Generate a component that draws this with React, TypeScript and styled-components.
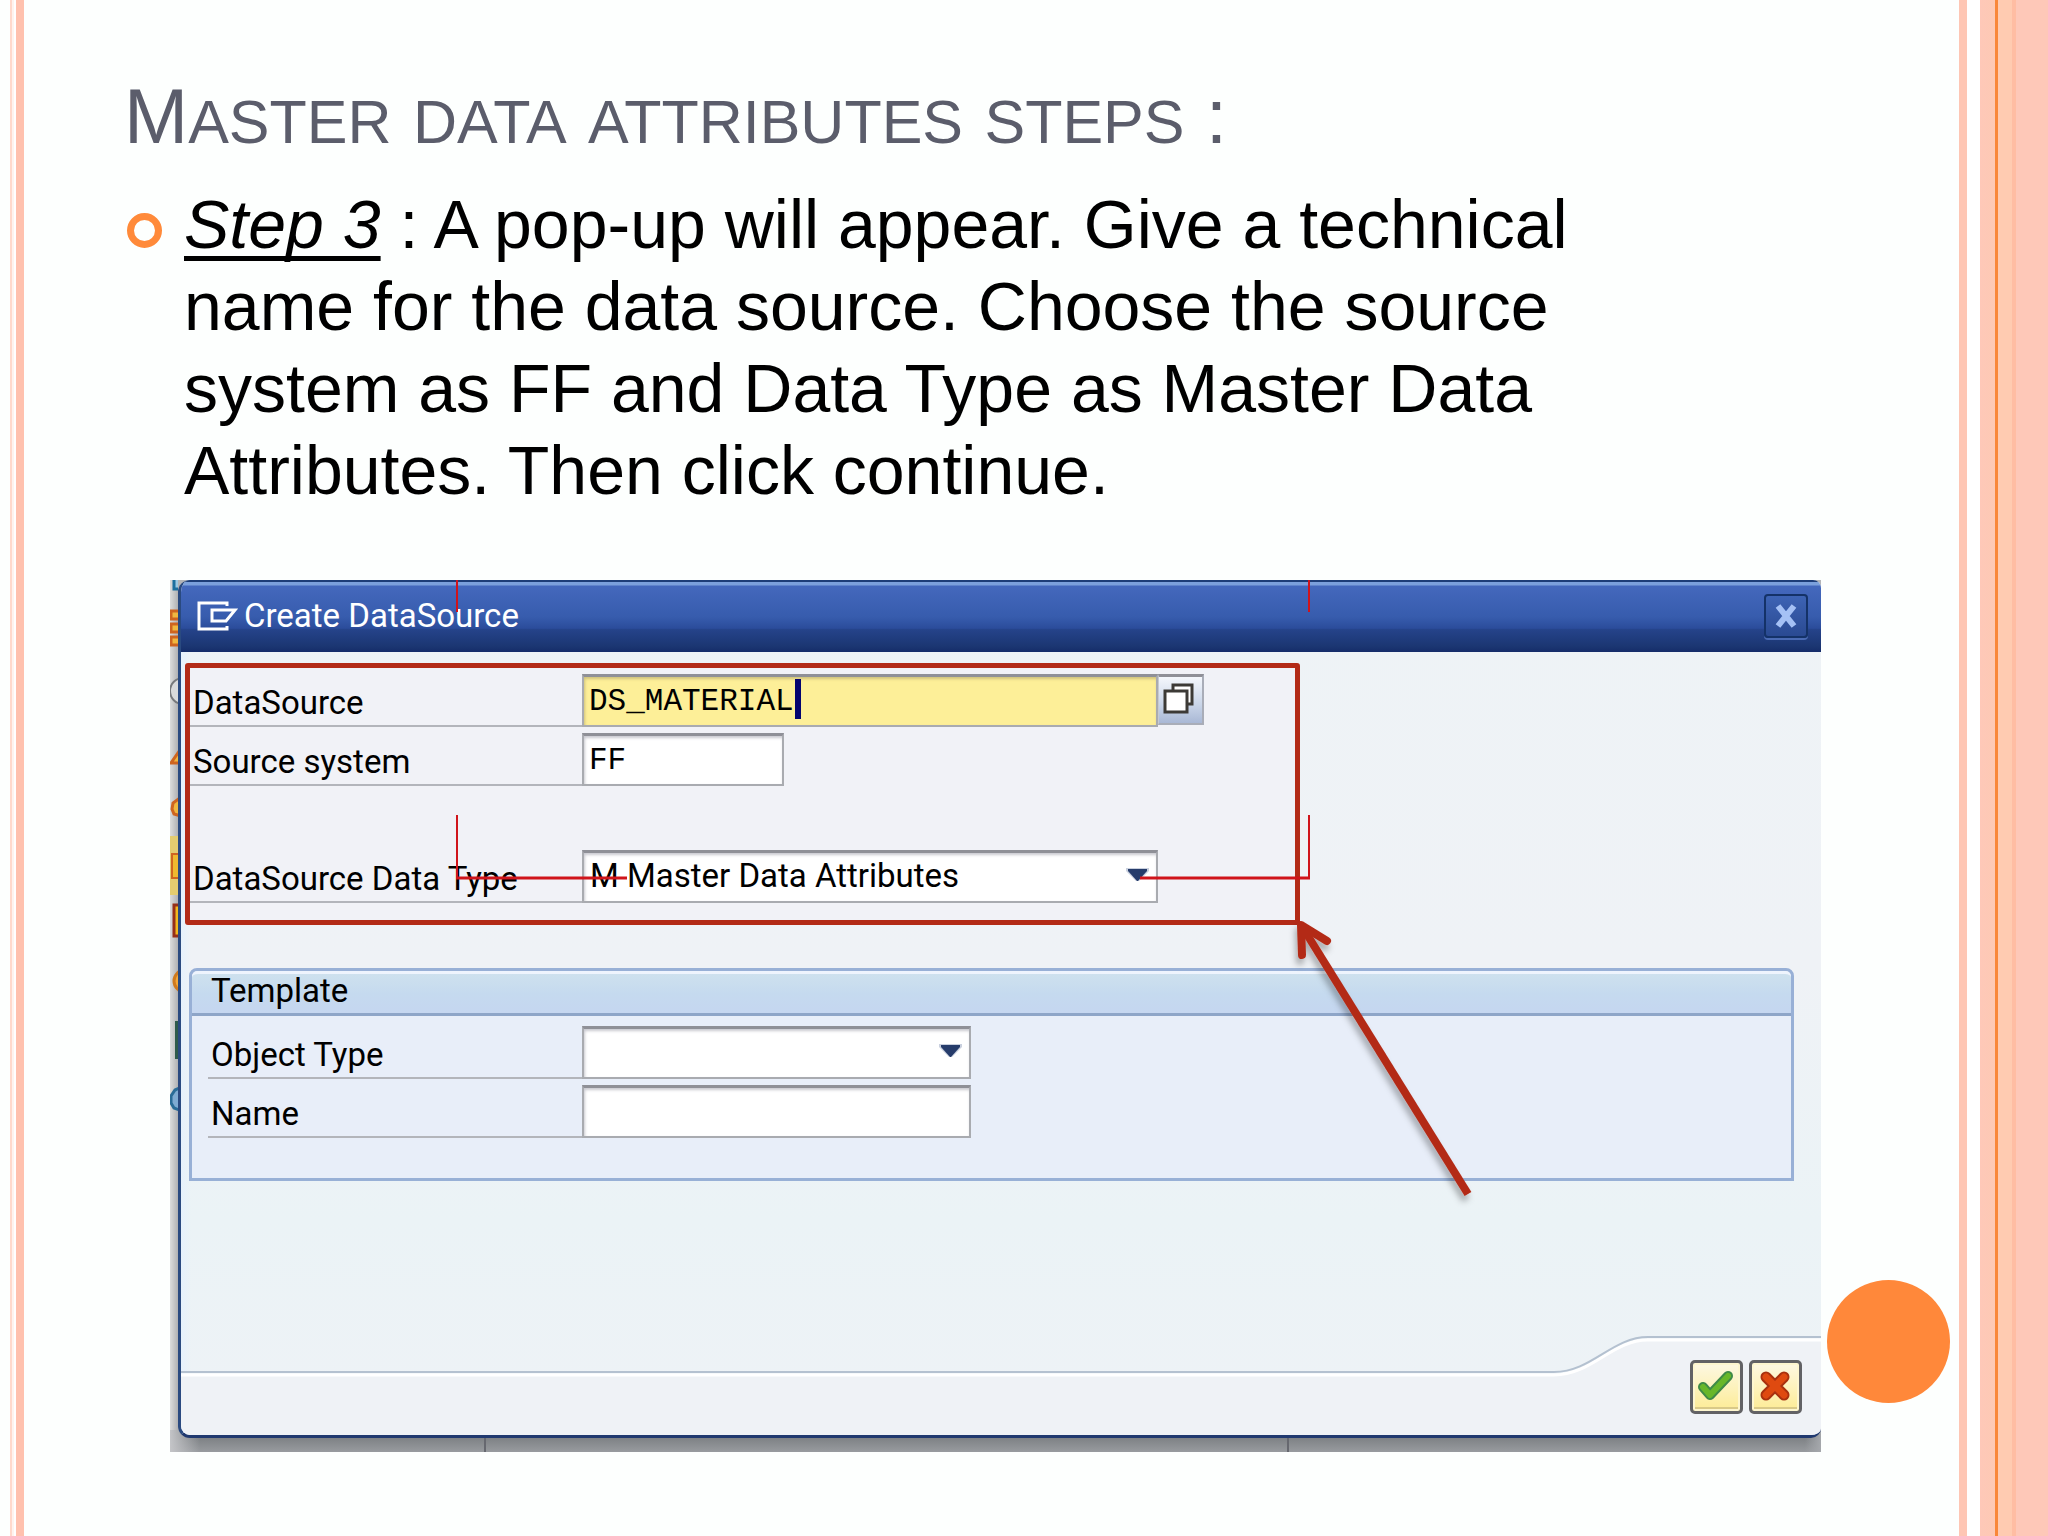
import React from "react";
import styled, { createGlobalStyle } from "styled-components";

const UI_FONT = `Roboto, "Noto Sans", sans-serif`;
const MONO_FONT = `"Liberation Mono", "DejaVu Sans Mono", monospace`;

const GlobalStyle = createGlobalStyle`
  *, *::before, *::after { box-sizing: border-box; }
  body { margin: 0; background: #fdfffe; color: #000; font-family: "Liberation Sans", Arial, sans-serif; }
`;

const Slide = styled.div`
  position: relative;
  display: grid;
  grid-template-columns: 24px minmax(0, 1fr) 89px;
  min-height: 100vh;
`;

const LeftStripes = styled.div`
  background: linear-gradient(
    90deg,
    transparent 10px,
    #ffd9cc 10px,
    #ffd9cc 12px,
    #fff3ee 12px,
    #fff3ee 14px,
    #ffffff 14px,
    #ffffff 16px,
    #ffc1ae 16px
  );
`;

const RightStripes = styled.div`
  background: linear-gradient(
    90deg,
    #fec6b4 8px,
    #ffffff 8px,
    #ffffff 21px,
    #fec8b8 21px,
    #fdc9b4 36px,
    #f98739 36px,
    #f98739 39px,
    #ffcbb1 39px,
    #ffcbb1 53px,
    #ffbda3 53px,
    #ffbda3 57px,
    #fec8b8 57px
  );
`;

const Content = styled.main`
  padding: 71px 138px 80px 100px;
`;

const Title = styled.h1`
  margin: 0;
  font-size: 77px;
  line-height: 90px;
  font-weight: 400;
  color: #5b5d6b;
`;

const SmallCaps = styled.span`
  font-size: 61px;
  line-height: 1;
  text-transform: uppercase;
`;

const BulletList = styled.ul`
  margin: 22px 0 69px;
  padding: 0;
  list-style: none;
`;

const Bullet = styled.li`
  display: grid;
  grid-template-columns: 60px minmax(0, 1fr);
  padding-right: 140px;
  font-size: 68px;
  line-height: 82px;
`;

const Ring = styled.span`
  width: 35px;
  height: 35px;
  margin: 30px 0 0 3px;
  border: 7px solid #ff8a3a;
  border-radius: 50%;
`;

const StepName = styled.em`
  text-decoration: underline;
  text-decoration-thickness: 5px;
  text-underline-offset: 8px;
  text-decoration-skip-ink: none;
`;

const Figure = styled.figure`
  position: relative;
  display: grid;
  grid-template-columns: 8px minmax(0, 1fr);
  margin: 0 0 0 46px;
  padding-bottom: 14px;
  background: linear-gradient(90deg, #dcdddd, #b0b1b3 8px, #b4b5b8 10px);
`;

const Backdrop = styled.div`
  position: absolute;
  inset: auto 0 0 0;
  height: 22px;
  background:
    linear-gradient(90deg, #c4c5c8, transparent 30px, transparent calc(100% - 16px), #a5a8ac),
    linear-gradient(#6f7376, #989b9f);
  span {
    position: absolute;
    top: 0;
    bottom: 0;
    width: 2px;
    background: #66686f;
  }
  span:first-child { left: 314px; }
  span:last-child { left: 1117px; }
`;

const BehindIcons = styled.svg`
  display: block;
  width: 8px;
  height: 560px;
`;

const Dialog = styled.section`
  position: relative;
  overflow: hidden;
  border-left: 3px solid #2a4a80;
  border-bottom: 3px solid #20396f;
  border-radius: 12px 8px 10px 12px;
  background: linear-gradient(90deg, #e6f1fc, transparent 10px),
    linear-gradient(#eef3f6, #eff2f6 45%, #ebf3f6 75%, #eef2f6);
  font-family: ${UI_FONT};
  font-size: 33px;
  line-height: 40px;
`;

const TitleBar = styled.header`
  display: flex;
  align-items: center;
  gap: 6px;
  height: 72px;
  padding: 0 13px 2px 16px;
  border-top: 2px solid #1d3d78;
  background: linear-gradient(
    #7ba0dc 0,
    #7ba0dc 3px,
    #4468bd 4px,
    #375cad 50%,
    #2b4c9b 66%,
    #25438a 68%,
    #1b3672 92%,
    #152c69
  );
  color: #fff;
  h2 { margin: 0; flex: 1; font-size: 33px; font-weight: 400; }
`;

const CloseButton = styled.button`
  display: grid;
  place-items: center;
  width: 44px;
  height: 44px;
  padding: 0;
  border: 2px solid #143268;
  border-radius: 4px;
  background: linear-gradient(#3d63b4, #2a4a92);
  box-shadow: 0 2px 0 #4a6bb4;
`;

const Form = styled.form`
  margin: 0;
`;

const SourceFields = styled.div`
  position: relative;
  display: grid;
  gap: 6px;
  width: 1115px;
  margin: 11px 0 0 4px;
  padding: 11px 5px 22px;
  background: #f1f2f7;
`;

const Highlight = styled.div`
  position: absolute;
  inset: 0;
  border: 5px solid #b32b17;
  border-radius: 3px;
  pointer-events: none;
`;

const Row = styled.div<{ $spaced?: boolean; $labelWidth: number }>`
  display: grid;
  grid-template-columns: ${(p) => p.$labelWidth}px auto auto;
  justify-content: start;
  height: 53px;
  margin-top: ${(p) => (p.$spaced ? 58 : 0)}px;
  label {
    display: flex;
    align-items: flex-end;
    padding: 0 3px 2px;
    border-bottom: 2px solid #b3b5bb;
  }
`;

const Field = styled.span<{ $width: number }>`
  position: relative;
  display: block;
  width: ${(p) => p.$width}px;
  height: 53px;
  svg {
    position: absolute;
    right: 9px;
    top: 18px;
    pointer-events: none;
  }
`;

const TextBox = styled.input<{ $active?: boolean }>`
  width: 100%;
  height: 100%;
  padding: 0 5px;
  border: 2px solid #a9abb0;
  border-top: 3px solid #8f9097;
  border-radius: 0;
  outline: none;
  background: ${(p) => (p.$active ? "#fdef98" : "#fff")};
  box-shadow: inset 1px 2px 3px ${(p) => (p.$active ? "#cfc27c" : "#c9c9d0")};
  color: #000;
  font: 31px ${MONO_FONT};
`;

const Caret = styled.i`
  position: absolute;
  left: 213px;
  top: 5px;
  width: 6px;
  height: 40px;
  background: #04046f;
`;

const DropDown = styled.select`
  appearance: none;
  width: 100%;
  height: 100%;
  padding: 0 40px 4px 6px;
  border: 2px solid #a9abb0;
  border-top: 3px solid #8f9097;
  border-radius: 0;
  outline: none;
  background: #fff;
  box-shadow: inset 1px 2px 3px #c9c9d0;
  color: #000;
  font: 33px ${UI_FONT};
`;

const HelpButton = styled.button`
  display: grid;
  place-items: center;
  width: 46px;
  height: 51px;
  padding: 0 4px 2px 0;
  border: 2px solid #a9adb8;
  border-top: 3px solid #8f9097;
  border-left: 1px solid #c5c9d3;
  background: linear-gradient(#f4f7fc, #c9d5e8 60%, #a9b8d5);
`;

const Template = styled.fieldset`
  min-width: 0;
  margin: 43px 27px 0 8px;
  padding: 0;
  border: 3px solid #98b0d6;
  border-radius: 8px 8px 0 0;
  background: #e8eef9;
`;

const TemplateHeader = styled.div`
  height: 45px;
  padding: 0 19px;
  border-top: 3px solid #eef4fd;
  border-bottom: 3px solid #8ea5c8;
  border-radius: 6px 6px 0 0;
  background: linear-gradient(#cee1ee, #c5daef 50%, #c5d6f0);
  line-height: 34px;
`;

const TemplateBody = styled.div`
  display: grid;
  gap: 6px;
  padding: 10px 16px 40px;
`;

const Footer = styled.footer`
  position: relative;
  display: flex;
  justify-content: flex-end;
  gap: 6px;
  margin-top: 153px;
  padding: 26px 19px 21px;
`;

const FooterRule = styled.svg`
  position: absolute;
  inset: 0;
  width: 100%;
  height: 100%;
`;

const IconButton = styled.button`
  position: relative;
  display: grid;
  place-items: center;
  width: 53px;
  height: 54px;
  padding: 0 2px 2px 0;
  border: 3px solid #626265;
  border-radius: 5px;
  background: linear-gradient(#fdf8e3, #fdf1b5 60%, #fdeb94);
  box-shadow: inset 0 0 0 2px #fdf6cf, inset 0 -4px 0 #d9c988;
`;

const Annotations = styled.svg`
  position: absolute;
  left: 0;
  top: 0;
  width: 1400px;
  height: 660px;
  pointer-events: none;
`;

const Dot = styled.div`
  position: absolute;
  right: 98px;
  bottom: 133px;
  width: 123px;
  height: 123px;
  border-radius: 50%;
  background: #ff883a;
`;

const ArrowDown = () => (
  <svg width="23" height="15" viewBox="0 0 23 15" aria-hidden="true">
    <path d="M0 0h23v3L13 13h-3L0 3z" fill="#c9d0de" />
    <path d="M2 1h19v2l-9 10h-1L2 3z" fill="#263c6b" />
  </svg>
);

const EdgeIcons = () => (
  <BehindIcons viewBox="0 0 8 560" aria-hidden="true">
    <path d="M4 0v9h7V0" fill="#9cc8e2" stroke="#1c6f9e" strokeWidth="3" />
    <g fill="#f0b840" stroke="#cf6520" strokeWidth="3">
      <path d="M1 31h12v8H1zM1 44h12v8H1zM1 57h12v8H1z" />
      <path d="M10 170L1 183h12zM10 218l-7 5-1 6 2 5 7 2z" />
    </g>
    <circle cx="13" cy="111" r="13" fill="#d9dadb" stroke="#77797c" strokeWidth="2" />
    <path d="M0 256h10v59H0z" fill="#e3cc70" />
    <path d="M2 274h12v24H2z" fill="#eeb92f" stroke="#cf6520" strokeWidth="2" />
    <path d="M4 325h12v31H4z" fill="#f2b91e" stroke="#96301a" strokeWidth="3" />
    <circle cx="15" cy="401" r="11" fill="#f5a938" stroke="#d07a1e" strokeWidth="3" />
    <path d="M5 441h4v38H5z" fill="#2f5b4c" />
    <path d="M12 507l-7 3-4 6v7l3 5 8 3z" fill="#7fabd2" stroke="#2a6c97" strokeWidth="3" />
  </BehindIcons>
);

export default function App() {
  return (
    <>
      <GlobalStyle />
      <Slide>
        <LeftStripes />
        <Content>
          <Title>
            M<SmallCaps>aster</SmallCaps> <SmallCaps>data</SmallCaps>{" "}
            <SmallCaps>attributes</SmallCaps> <SmallCaps>steps</SmallCaps> :
          </Title>
          <BulletList>
            <Bullet>
              <Ring />
              <span>
                <StepName>Step 3</StepName> : A pop-up will appear. Give a technical name for the
                data source. Choose the source system as FF and Data Type as Master Data
                Attributes. Then click continue.
              </span>
            </Bullet>
          </BulletList>
          <Figure>
            <Backdrop>
              <span />
              <span />
            </Backdrop>
            <EdgeIcons />
            <Dialog aria-label="Create DataSource">
              <TitleBar>
                <svg width="41" height="30" viewBox="0 0 41 30" fill="none" stroke="#fff" strokeWidth="3" aria-hidden="true">
                  <path d="M30 5V2H2v26h28v-3" />
                  <path d="M38 9H15v11h14z" />
                </svg>
                <h2>Create DataSource</h2>
                <CloseButton type="button" aria-label="Close">
                  <svg width="24" height="24" viewBox="0 0 24 24" aria-hidden="true">
                    <path d="M4 2l16 20M20 2L4 22" stroke="#a5c1f5" strokeWidth="6" />
                  </svg>
                </CloseButton>
              </TitleBar>
              <Form onSubmit={(e) => e.preventDefault()}>
                <SourceFields>
                  <Row $labelWidth={392}>
                    <label htmlFor="datasource">DataSource</label>
                    <Field $width={576}>
                      <TextBox id="datasource" $active defaultValue="DS_MATERIAL" />
                      <Caret />
                    </Field>
                    <HelpButton type="button" aria-label="Choose a DataSource">
                      <svg width="32" height="32" viewBox="0 0 32 32" fill="#fff" stroke="#3c3a36" strokeWidth="3" aria-hidden="true">
                        <path d="M10 2h19v19H10z" />
                        <path d="M2 8h22v21H2z" />
                      </svg>
                    </HelpButton>
                  </Row>
                  <Row $labelWidth={392}>
                    <label htmlFor="system">Source system</label>
                    <Field $width={202}>
                      <TextBox id="system" defaultValue="FF" />
                    </Field>
                  </Row>
                  <Row $labelWidth={392} $spaced>
                    <label htmlFor="datatype">DataSource Data Type</label>
                    <Field $width={576}>
                      <DropDown id="datatype">
                        <option>M Master Data Attributes</option>
                      </DropDown>
                      <ArrowDown />
                    </Field>
                  </Row>
                  <Highlight />
                </SourceFields>
                <Template aria-label="Template">
                  <TemplateHeader>Template</TemplateHeader>
                  <TemplateBody>
                    <Row $labelWidth={374}>
                      <label htmlFor="objecttype">Object Type</label>
                      <Field $width={389}>
                        <DropDown id="objecttype">
                          <option></option>
                        </DropDown>
                        <ArrowDown />
                      </Field>
                    </Row>
                    <Row $labelWidth={374}>
                      <label htmlFor="name">Name</label>
                      <Field $width={389}>
                        <TextBox id="name" />
                      </Field>
                    </Row>
                  </TemplateBody>
                </Template>
                <Footer>
                  <FooterRule viewBox="0 0 1639 101" preserveAspectRatio="xMaxYMin slice" fill="none" aria-hidden="true">
                    <path d="M0 41h1372c38 0 58-35 94-35h173v95H0z" fill="#eff2f6" />
                    <path d="M0 41h1372c38 0 58-35 94-35h173" stroke="#fff" strokeWidth="3" />
                    <path d="M0 38h1372c38 0 58-35 94-35h173" stroke="#b4c1d0" strokeWidth="2" />
                  </FooterRule>
                  <IconButton type="submit" aria-label="Continue">
                    <svg width="37" height="32" viewBox="0 0 37 32" fill="none" strokeLinecap="round" strokeLinejoin="round" aria-hidden="true">
                      <path d="M6 17l7 8L31 6" stroke="#3f8a48" strokeWidth="10" />
                      <path d="M6 17l7 8L31 6" stroke="#68b72a" strokeWidth="6" />
                    </svg>
                  </IconButton>
                  <IconButton type="button" aria-label="Cancel">
                    <svg width="32" height="32" viewBox="0 0 32 32" strokeLinecap="round" aria-hidden="true">
                      <path d="M7 7l18 18M25 7L7 25" stroke="#a8310f" strokeWidth="11" />
                      <path d="M7 7l18 18M25 7L7 25" stroke="#df4a10" strokeWidth="7" />
                    </svg>
                  </IconButton>
                </Footer>
              </Form>
            </Dialog>
            <Annotations viewBox="0 0 1400 660" fill="none" aria-hidden="true">
              <defs>
                <filter id="shadow" x="-20%" y="-20%" width="140%" height="140%">
                  <feDropShadow dx="-2" dy="6" stdDeviation="3" floodColor="#000" floodOpacity="0.3" />
                </filter>
              </defs>
              <g stroke="#d0141b">
                <path d="M287 0v32M287 235v63M1139 0v32M1139 235v63" strokeWidth="2" />
                <path d="M286 298h171M1140 298H970" strokeWidth="3" />
              </g>
              <g stroke="#b32b17" strokeWidth="8" filter="url(#shadow)">
                <path d="M1133 348l165 266" />
                <path d="M1132 375l-1-30 26 16" strokeLinecap="round" strokeLinejoin="round" />
              </g>
            </Annotations>
          </Figure>
        </Content>
        <RightStripes />
        <Dot />
      </Slide>
    </>
  );
}
